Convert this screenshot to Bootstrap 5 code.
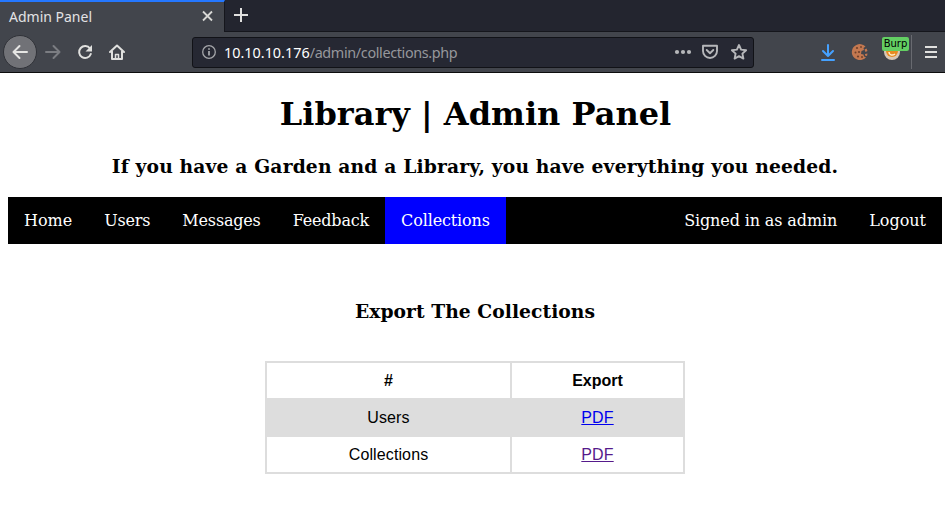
<!DOCTYPE html>
<html lang="en">
<head>
<meta charset="utf-8">
<meta name="viewport" content="width=device-width, initial-scale=1">
<title>Admin Panel</title>
<link href="https://cdn.jsdelivr.net/npm/bootstrap@5.3.0/dist/css/bootstrap.min.css" rel="stylesheet">
<style>
  body { font-family: "DejaVu Serif", serif; line-height: normal; color: #000; height: 519px; overflow: hidden; }
  .chrome { font-family: "Noto Sans", sans-serif; }
  .chrome svg { display: block; flex: none; }
  .tab-strip { height: 32px; background: #23252f; }
  .browser-tab { width: 225px; background: #42454c; border-top: 2px solid #2477ff; border-right: 1px solid #15161c; padding: 0 8px 0 9px; color: #e2e2e4; }
  .tab-title { font-size: 14px; position: relative; top: -1px; }
  .browser-tab svg, .new-tab svg { margin-top: -2px; }
  .new-tab { border-bottom: 1px solid #15161c; padding-left: 8px; }
  .toolbar { height: 41px; background: #42454c; border-bottom: 1px solid #0c0c0d; padding-left: 3px; }
  .back-btn { width: 34px; height: 34px; background: #717277; border: 1px solid #303238; }
  .address { width: 562px; height: 31px; margin-left: 67px; background: #262833; border: 1px solid #111217; border-radius: 3px; padding: 0 6px 0 9px; font-size: 14.4px; color: #fff; }
  .address-path { color: #96979c; letter-spacing: -.36px; }
  .download-icon { margin-left: 66px; }
  .cookie-icon { margin-left: 15px; }
  .menu-icon { margin: 0 8px 0 13px; }
  .ext { width: 24px; height: 32px; margin-left: 14px; }
  .ext-label { left: -1px; top: 1px; width: 27px; height: 14px; border-radius: 2px; background: #63cf63; color: #000; font: 10px/13px "DejaVu Sans", sans-serif; }
  .divider { width: 1px; height: 34px; background: #686a70; }
  .page { padding: 0 3px 0 8px; }
  .page h1 { font-size: 32px; line-height: 38px; margin: 22px 0 0 1px; }
  .page h3 { font-size: 18.72px; line-height: 22px; }
  .page .tagline { margin: 22px 0 20px; letter-spacing: .15px; }
  .page .section-title { margin: 56px 0 39px; letter-spacing: .05px; }
  .admin-nav { height: 47px; background: #000; }
  .admin-nav .nav-link { color: #fff; padding: 14px 16px 13px; line-height: 20px; font-size: 16px; letter-spacing: -.18px; }
  .admin-nav .nav-link.wide-text { letter-spacing: 0; }
  .admin-nav .nav-link.user-text { letter-spacing: -.12px; }
  .admin-nav .nav-link.active { background: #00f; letter-spacing: -.13px; }
  .export-table { width: 420px; font-family: "Liberation Sans", sans-serif; font-size: 16px; border-collapse: collapse; table-layout: fixed; }
  .export-table .col-name { width: 245px; }
  .export-table .col-export { width: 173px; }
  .export-table th, .export-table td { border: 2px solid #ddd; padding: 8px; height: 37px; line-height: 19px; }
  .export-table td { letter-spacing: .12px; }
  .export-table .shaded { background: #ddd; }
  .export-table a { color: #00e; }
  .export-table a.seen { color: #551a8b; }
</style>
<script src="https://cdn.jsdelivr.net/npm/bootstrap@5.3.0/dist/js/bootstrap.bundle.min.js"></script>
</head>
<body>
<header class="chrome">
  <div class="tab-strip d-flex">
    <div class="browser-tab d-flex align-items-center justify-content-between">
      <span class="tab-title">Admin Panel</span>
      <svg width="16" height="16" viewBox="0 0 16 16" fill="none" stroke="#d8d8d5" stroke-width="1.8"><path d="M3 3.500l9 9M12 3.500l-9 9"/></svg>
    </div>
    <div class="new-tab flex-grow-1 d-flex align-items-center">
      <svg width="16" height="16" viewBox="0 0 16 16" fill="none" stroke="#e0e0df" stroke-width="2"><path d="M8 1v14M1 8h14"/></svg>
    </div>
  </div>
  <div class="toolbar d-flex align-items-center">
    <div class="back-btn rounded-circle d-flex align-items-center justify-content-center">
      <svg width="16" height="16" viewBox="0 0 16 16" fill="none" stroke="#e6e6e4" stroke-width="2" stroke-linecap="round" stroke-linejoin="round"><path d="M15 8H1.500M7.500 2l-6 6 6 6"/></svg>
    </div>
    <svg class="ms-2" width="16" height="16" viewBox="0 0 16 16" fill="none" stroke="#7b7d82" stroke-width="2" stroke-linecap="round" stroke-linejoin="round"><path d="M1 8h13.500M8.500 2l6 6-6 6"/></svg>
    <svg class="ms-3" width="16" height="16" viewBox="0 0 16 16"><path d="M13 4.500A6 6 0 1 0 13.800 10" fill="none" stroke="#e0e0de" stroke-width="2" stroke-linecap="round"/><path d="M15 1v6.500H8.500z" fill="#e0e0de"/></svg>
    <svg class="ms-3" width="16" height="16" viewBox="0 0 16 16" fill="none" stroke="#e0e0de" stroke-width="2" stroke-linejoin="round" stroke-linecap="round"><path d="M1 8l7-6.500L15 8M3 7.500V15h10V7.500"/><path d="M6.500 15v-4.500h3V15" stroke-width="1.500"/></svg>
    <div class="address d-flex align-items-center">
      <svg width="14" height="14" viewBox="0 0 14 14" fill="none" stroke="#a5a6aa"><circle cx="7" cy="7" r="6.300" stroke-width="1.300"/><path d="M7 6v4.500M7 3.200v1.600" stroke-width="1.800"/></svg>
      <span class="address-text ms-2">10.10.10.176<span class="address-path">/admin/collections.php</span></span>
      <div class="ms-auto d-flex align-items-center gap-2">
        <svg width="20" height="16" viewBox="0 0 20 16" fill="#b6b7ba"><circle cx="4" cy="8" r="2.100"/><circle cx="10" cy="8" r="2.100"/><circle cx="16" cy="8" r="2.100"/></svg>
        <svg width="18" height="16" viewBox="0 0 18 16" fill="none" stroke="#b6b7ba" stroke-width="1.900" stroke-linejoin="round" stroke-linecap="round"><path d="M2 1.800h14V7a7 7 0 0 1-14 0z"/><path d="M5.700 6L9 9.200 12.300 6"/></svg>
        <svg class="ms-1" width="16" height="16" viewBox="0 0 16 16" fill="none" stroke="#b6b7ba" stroke-width="1.900" stroke-linejoin="round"><path d="M8 1l2.100 4.600 5 .6-3.700 3.400 1 5L8 12.200l-4.400 2.400 1-5L.9 6.200l5-.6z"/></svg>
      </div>
    </div>
    <svg class="download-icon" width="16" height="18" viewBox="0 0 16 18" fill="none" stroke="#45a1ff" stroke-width="2" stroke-linecap="round" stroke-linejoin="round"><path d="M8 2v10.500M3 8l5 5 5-5M2 17h12"/></svg>
    <svg class="cookie-icon" width="18" height="18" viewBox="0 0 18 18"><path d="M10 1.200A8 8 0 1 0 15 14.200l-2-.7-.5-2-2.500-.5.500-3L13 7l-.500-2 2-1.500A8 8 0 0 0 10 1.200z" fill="#c37850"/><path d="M13.500 6.500l2-1 1 2.500-2 1zM14 11l2.500-.5-.5 2.500-2-.5z" fill="#c37850"/><g fill="#70402a"><circle cx="6" cy="5" r="1.100"/><circle cx="10" cy="4" r=".9"/><circle cx="4.500" cy="9.500" r="1"/><circle cx="8" cy="9" r="1.100"/><circle cx="7" cy="13.500" r="1.100"/><circle cx="11" cy="14" r="1"/></g></svg>
    <div class="ext position-relative d-flex align-items-center">
      <svg width="18" height="18" viewBox="0 0 18 18"><circle cx="9" cy="9" r="8" fill="#d9c8b6"/><path d="M3 8h12a6 6 0 0 1-12 0z" fill="#e88b22"/><path d="M6 9c0 3 3 4 6 2" fill="none" stroke="#fff1ce" stroke-width="1.500"/></svg>
      <span class="ext-label position-absolute text-center">Burp</span>
    </div>
    <div class="divider ms-auto"></div>
    <svg class="menu-icon" width="12" height="14" viewBox="0 0 12 14" stroke="#e0e0de" stroke-width="2"><path d="M0 2h12M0 7h12M0 12h12"/></svg>
  </div>
</header>
<main class="page">
  <h1 class="fw-bold text-center">Library | Admin Panel</h1>
  <h3 class="tagline fw-bold text-center">If you have a Garden and a Library, you have everything you needed.</h3>
  <nav class="admin-nav nav d-flex">
    <a class="nav-link wide-text" href="#">Home</a>
    <a class="nav-link" href="#">Users</a>
    <a class="nav-link" href="#">Messages</a>
    <a class="nav-link" href="#">Feedback</a>
    <a class="nav-link active" href="#">Collections</a>
    <a class="nav-link user-text ms-auto" href="#">Signed in as admin</a>
    <a class="nav-link wide-text" href="#">Logout</a>
  </nav>
  <h3 class="section-title fw-bold text-center">Export The Collections</h3>
  <table class="export-table mx-auto text-center">
    <colgroup><col class="col-name"><col class="col-export"></colgroup>
    <tr><th>#</th><th>Export</th></tr>
    <tr class="shaded"><td>Users</td><td><a href="#">PDF</a></td></tr>
    <tr><td>Collections</td><td><a class="seen" href="#">PDF</a></td></tr>
  </table>
</main>
</body>
</html>
